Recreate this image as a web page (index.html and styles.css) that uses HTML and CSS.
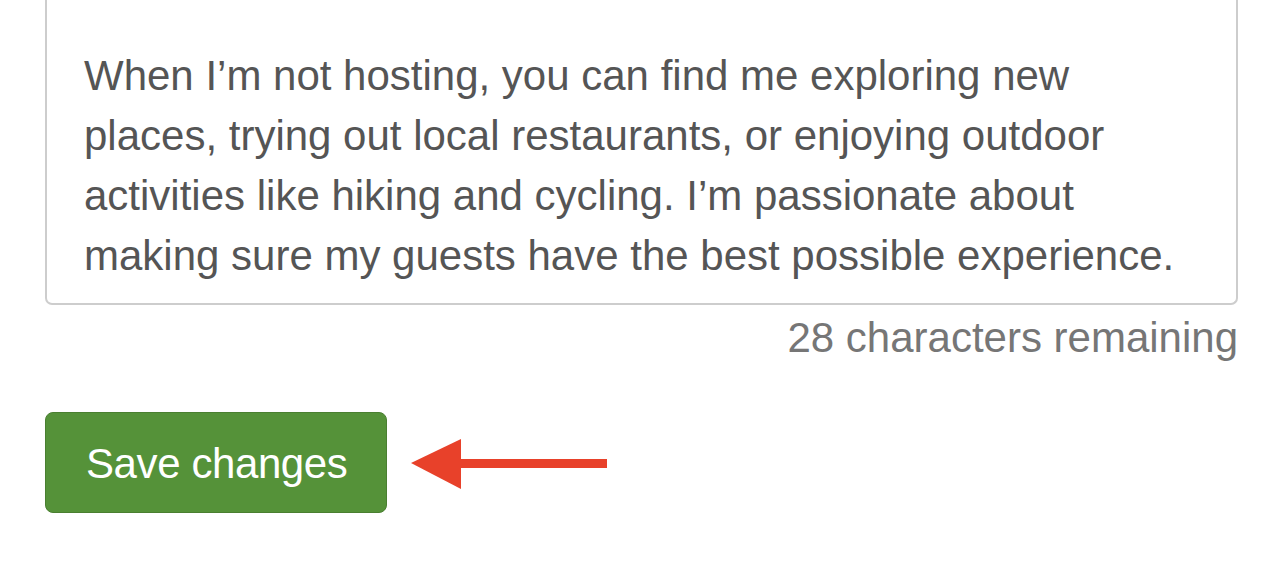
FILE: index.html
```html
<!DOCTYPE html>
<html lang="en">
<head>
    <meta charset="UTF-8">
    <title>Edit profile - About you</title>
    <link rel="stylesheet" href="styles.css">
</head>
<body>
    <div class="container">
        <div class="bio-field">
            <p class="bio-text">When I’m not hosting, you can find me exploring new places, trying out local restaurants, or enjoying outdoor activities like hiking and cycling. I’m passionate about making sure my guests have the best possible experience.</p>
        </div>
        <div class="char-count">28 characters remaining</div>

        <div class="actions">
            <button class="save-btn" type="button">Save changes</button>
            <svg class="pointer-arrow" width="196" height="50" viewBox="0 0 196 50">
                <polygon points="0,24 50,0 50,50" fill="#e8412a"/>
                <rect x="48" y="20" width="148" height="9" fill="#e8412a"/>
            </svg>
        </div>
    </div>
</body>
</html>
```

FILE: styles.css
```css
* {
    margin: 0;
    padding: 0;
    box-sizing: border-box;
}

body {
    font-family: 'Liberation Sans', Arial, Helvetica, sans-serif;
    background-color: #fff;
    color: #555;
}

.container {
    width: 1238px;
    padding-left: 45px;
}

.bio-field {
    border: 2px solid #cdcdcd;
    border-top: none;
    border-radius: 0 0 7px 7px;
    padding: 46px 40px 17px 37px;
}

.bio-text {
    font-size: 42px;
    line-height: 60px;
    color: #555;
}

.char-count {
    margin-top: 9px;
    text-align: right;
    font-size: 42px;
    line-height: 48px;
    color: #767676;
}

.actions {
    display: flex;
    align-items: center;
    gap: 24px;
    margin-top: 50px;
}

.save-btn {
    width: 342px;
    padding: 27px 0 24px 40px;
    text-align: left;
    font-family: inherit;
    font-size: 42px;
    line-height: 48px;
    letter-spacing: -0.4px;
    color: #fff;
    background-color: #559239;
    border: 1px solid #4a7f31;
    border-radius: 8px;
    cursor: pointer;
}

.pointer-arrow {
    display: block;
    margin-top: 2px;
}
```
